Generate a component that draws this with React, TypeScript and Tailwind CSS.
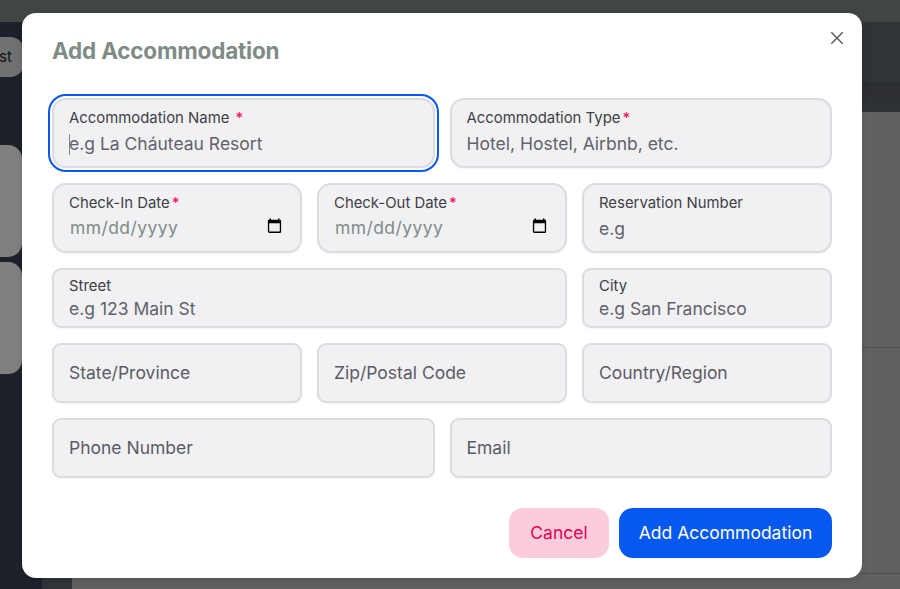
import React from "react";

type FieldProps = {
  label: string;
  hint?: string;
  required?: boolean;
  tall?: boolean;
  spaced?: boolean;
  focused?: boolean;
  date?: boolean;
  span: string;
};

function CalendarIcon() {
  return (
    <svg width="15" height="16" viewBox="0 0 15 16" className="mb-[4px] shrink-0" aria-hidden="true">
      <path
        fill="#000"
        d="M2.5 0.5h1.5v1.2h7V0.5h1.5v1.2h.4c.8 0 1.2.5 1.2 1.2v10.8c0 .8-.4 1.2-1.2 1.2H2.1c-.8 0-1.2-.4-1.2-1.2V2.9c0-.7.4-1.2 1.2-1.2h.4zM2.2 5.2v8.4h10.6V5.2z"
      />
    </svg>
  );
}

function Field({ label, hint, required, tall, spaced, focused, date, span }: FieldProps) {
  return (
    <div
      className={`${span} ${tall ? "h-[70px] rounded-[14px]" : "h-[60px] rounded-[9px]"} ${
        focused ? "outline-2 outline-offset-2 outline-[#0758ee]" : ""
      } flex flex-col border-2 border-[#dcdce0] bg-[#f1f1f4] px-[15px] whitespace-nowrap shadow-[0_1px_2px_rgba(0,0,0,0.05)]`}
    >
      {hint ? (
        <>
          <div className={`${tall ? "mt-[8px]" : "mt-[6px]"} flex h-5 text-[14.9px] leading-5 text-[#3f3f46]`}>
            <span>{label}</span>
            {required && <span className={`${spaced ? "ml-[6px]" : "ml-[2px]"} font-medium text-[#f31260]`}>*</span>}
          </div>
          <div
            className={`${tall ? (date ? "mt-[4px]" : "mt-[5px]") : "mt-[2px]"} flex h-[22px] items-center justify-between text-[17.5px] leading-[22px] ${
              date ? "pl-[1px] pr-[3px] tracking-[0.42px] text-[#7f8c86]" : "text-[#62626b]"
            }`}
          >
            {focused && <i className="-mr-px h-[21px] w-px shrink-0 bg-[#7f8c86]" />}
            <span className="flex-1">{hint}</span>
            {date && <CalendarIcon />}
          </div>
        </>
      ) : (
        <div className="mt-4 text-[17.5px] leading-6 text-[#5b5b64]">{label}</div>
      )}
    </div>
  );
}

function Backdrop() {
  return (
    <div className="flex h-full flex-col">
      <div className="h-[22px] bg-[#414543]" />
      <div className="flex flex-1">
        <div className="w-[42px] bg-[#1e2129]">
          <div className="mt-[15px] h-10 w-6 rounded-r-[14px] bg-[#707173] text-[15px] leading-10 text-[#111]">
            <span className="-ml-px">st</span>
          </div>
          <div className="mt-[68px] h-28 w-[22px] rounded-r-[14px] bg-[#808080]" />
          <div className="mt-[5px] h-28 w-[22px] rounded-r-[14px] bg-[#808080]" />
        </div>
        <div className="w-[30px] bg-[#303439]" />
        <div className="flex flex-1 flex-col bg-[#606163]">
          <div className="h-[60px] bg-[#303338]" />
          <div className="h-[30px] bg-linear-to-b from-[#2b2c30] to-[#303338]" />
          <div className="mt-[235px] h-px bg-[#4f5052]" />
          <div className="mt-[225px] h-px bg-[#4f5052]" />
        </div>
      </div>
    </div>
  );
}

export default function App() {
  return (
    <div className="relative h-[589px] w-[900px] overflow-hidden font-['Inter','Liberation_Sans',sans-serif]">
      <Backdrop />
      <div
        role="dialog"
        className="absolute top-[13px] left-[22px] flex h-[565px] w-[840px] flex-col rounded-[14px] bg-white px-[30px] shadow-[0_2px_8px_rgba(0,0,0,0.12)]"
      >
        <header className="flex h-[85px] items-start justify-between">
          <h1 className="mt-[22px] text-[22.5px] leading-8 font-bold tracking-[-0.2px] text-[#7f8c86]">
            Add Accommodation
          </h1>
          <svg width="14" height="14" viewBox="0 0 14 14" className="mt-[18px] -mr-3" aria-label="Close">
            <path d="M1.3 1.3 12.7 12.7M12.7 1.3 1.3 12.7" stroke="#5c5c65" strokeWidth="1.5" fill="none" />
          </svg>
        </header>
        <form className="grid grid-cols-6 gap-[15px]">
          <Field span="col-span-3" label="Accommodation Name" hint="e.g La Cháuteau Resort" required spaced tall focused />
          <Field span="col-span-3" label="Accommodation Type" hint="Hotel, Hostel, Airbnb, etc." required tall />
          <Field span="col-span-2" label="Check-In Date" hint="mm/dd/yyyy" required tall date />
          <Field span="col-span-2" label="Check-Out Date" hint="mm/dd/yyyy" required tall date />
          <Field span="col-span-2" label="Reservation Number" hint="e.g" tall />
          <Field span="col-span-4" label="Street" hint="e.g 123 Main St" />
          <Field span="col-span-2" label="City" hint="e.g San Francisco" />
          <Field span="col-span-2" label="State/Province" />
          <Field span="col-span-2" label="Zip/Postal Code" />
          <Field span="col-span-2" label="Country/Region" />
          <Field span="col-span-3" label="Phone Number" />
          <Field span="col-span-3" label="Email" />
        </form>
        <footer className="mt-[30px] flex justify-end gap-[10px] text-[17.5px]">
          <button className="h-[50px] w-[100px] rounded-[14px] bg-[#fbccdc] text-[#e8004f]">Cancel</button>
          <button className="h-[50px] w-[213px] rounded-[14px] bg-[#0758ee] whitespace-nowrap text-white">
            Add Accommodation
          </button>
        </footer>
      </div>
    </div>
  );
}
